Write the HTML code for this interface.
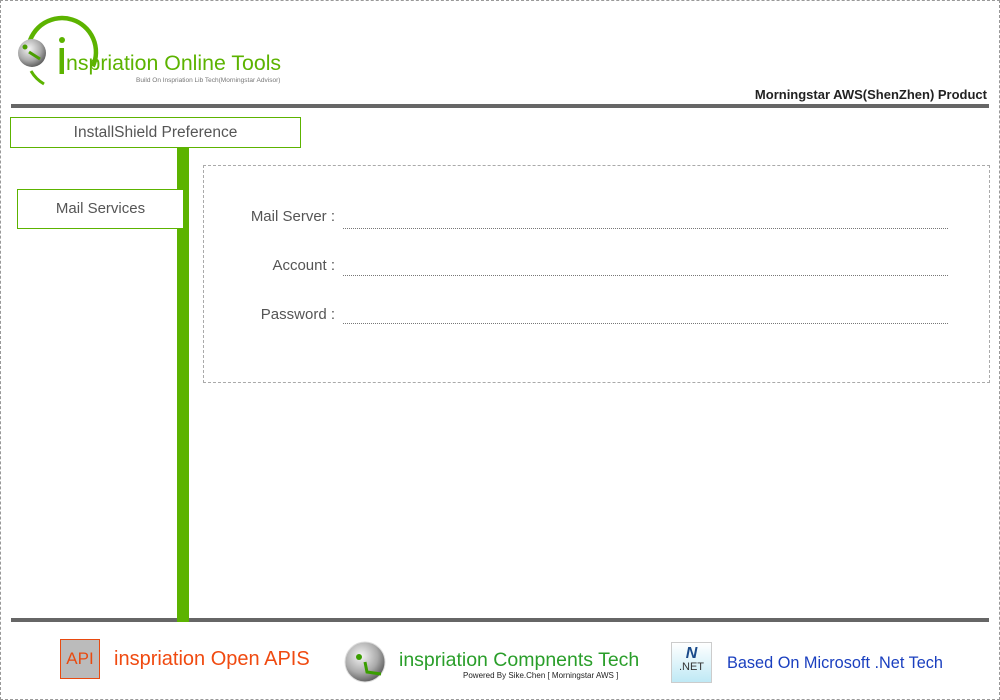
<!DOCTYPE html>
<html><head><meta charset="utf-8"><style>
body{margin:0;width:1000px;height:700px;position:relative;font-family:"Liberation Sans","DejaVu Sans",sans-serif;background:#fff;overflow:hidden}
.a{position:absolute}
.outer{left:0;top:0;width:998px;height:698px;border:1px dashed #999}
.bar{background:#666;left:11px;width:978px;height:4px}
.lbl{color:#555;font-size:15px;text-align:right;width:140px;left:195px}
.line{left:343px;width:605px;border-top:1px dotted #777}
</style></head><body>
<div class="a outer"></div>
<svg class="a" style="left:0;top:0" width="110" height="100" viewBox="0 0 110 100">
<defs><radialGradient id="g" cx="0.4" cy="0.35" r="0.7"><stop offset="0" stop-color="#f4f4f4"/><stop offset="0.6" stop-color="#aaa"/><stop offset="1" stop-color="#555"/></radialGradient></defs>
<path d="M28.5 46.1 A34 34 0 1 1 92.8 66.4" fill="none" stroke="#5cb300" stroke-width="4.5"/>
<path d="M31 71 A36 36 0 0 0 44 84" fill="none" stroke="#5cb300" stroke-width="3"/>
<circle cx="32" cy="53" r="14" fill="url(#g)"/>
<circle cx="25" cy="47" r="2.5" fill="#4a9e00"/>
<path d="M29 52 L40 59" stroke="#4a9e00" stroke-width="3"/>
<circle cx="62" cy="40" r="3" fill="#5cb300"/>
<rect x="59.5" y="48" width="4.5" height="26" fill="#5cb300"/>
</svg>
<div class="a" style="left:66px;top:51px;font-size:21.3px;color:#5cb300">nspriation Online Tools</div>
<div class="a" style="left:136px;top:77px;font-size:6.5px;color:#777">Build On Inspriation Lib Tech(Morningstar Advisor)</div>
<div class="a" style="right:13px;top:87px;font-size:13px;font-weight:bold;color:#222">Morningstar AWS(ShenZhen) Product</div>
<div class="a bar" style="top:104px"></div>
<div class="a" style="left:10px;top:117px;width:289px;height:29px;border:1px solid #5cb300;text-align:center;line-height:29px;font-size:15.5px;color:#555">InstallShield Preference</div>
<div class="a" style="left:177px;top:148px;width:12px;height:474px;background:#5cb300"></div>
<div class="a" style="left:17px;top:189px;width:165px;height:38px;border:1px solid #5cb300;text-align:center;line-height:38px;font-size:15px;color:#555;background:#fff">Mail Services</div>
<div class="a" style="left:203px;top:165px;width:785px;height:216px;border:1px dashed #aaa"></div>
<div class="a lbl" style="top:208px">Mail Server :</div>
<div class="a line" style="top:228px"></div>
<div class="a lbl" style="top:257px">Account :</div>
<div class="a line" style="top:275px"></div>
<div class="a lbl" style="top:306px">Password :</div>
<div class="a line" style="top:323px"></div>
<div class="a bar" style="top:618px"></div>
<div class="a" style="left:177px;top:618px;width:12px;height:4px;background:#5cb300"></div>
<div class="a" style="left:60px;top:639px;width:38px;height:38px;border:1px solid #e84a10;background:#bbb;color:#e84a10;font-size:17px;line-height:38px;text-align:center">API</div>
<div class="a" style="left:114px;top:648px;font-size:20px;color:#f04a10">inspriation Open APIS</div>
<svg class="a" style="left:343px;top:640px" width="44" height="44"><circle cx="22" cy="22" r="20" fill="url(#g)" stroke="#ddd"/><circle cx="16" cy="17" r="3" fill="#3a9e00"/><path d="M22 22 L24 32 L38 34" stroke="#3a9e00" stroke-width="3" fill="none"/></svg>
<div class="a" style="left:399px;top:649px;font-size:19.5px;color:#2a9e2a">inspriation Compnents Tech</div>
<div class="a" style="left:463px;top:671px;font-size:8px;color:#222">Powered By Sike.Chen [ Morningstar AWS ]</div>
<div class="a" style="left:671px;top:642px;width:39px;height:39px;border:1px solid #ccc;background:linear-gradient(#fff,#bfe9f5)"><div style="color:#1a4a8a;font-weight:bold;font-size:16px;text-align:center;margin-top:2px;font-style:italic">N</div><div style="font-size:11px;color:#333;text-align:center;margin-top:-2px">.NET</div></div>
<div class="a" style="left:727px;top:654px;font-size:16.3px;color:#1a3fbf">Based On Microsoft .Net Tech</div>
</body></html>
